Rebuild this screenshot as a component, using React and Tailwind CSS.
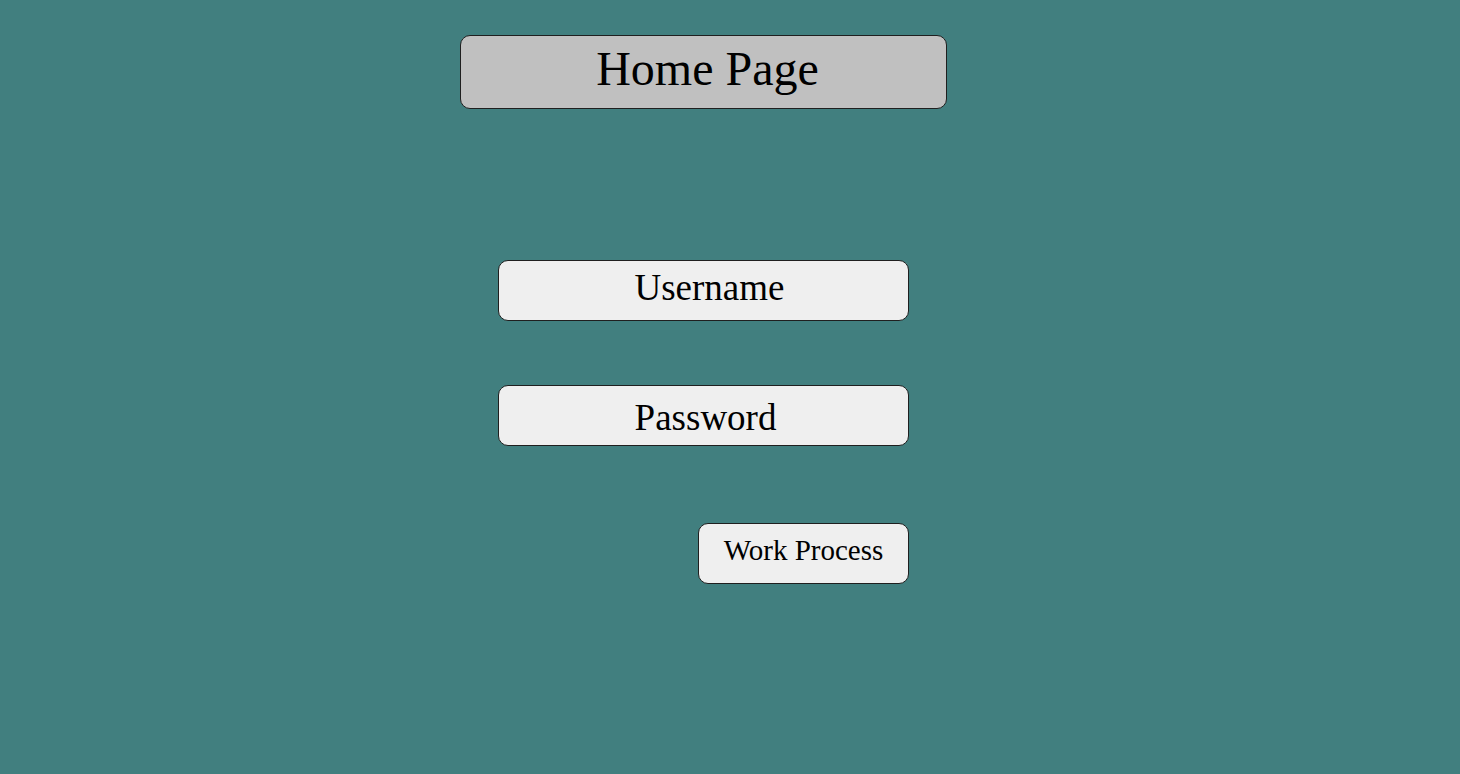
export default function App() {
  return (
    <div className="min-h-screen bg-[#417f7f] pt-[35px] pl-[460px] font-['Liberation_Serif','Times_New_Roman',serif] text-black">
      <div className="w-[487px] h-[74px] pl-2 pb-[6px] flex items-center justify-center rounded-[10px] border border-[#1f1f1f] bg-[#c0c0c0] text-[48px]">
        Home Page
      </div>
      <div className="ml-[38px] mt-[151px] w-[411px] flex flex-col">
        <button className="h-[61px] pl-3 pb-[5px] flex items-center justify-center rounded-[10px] border border-[#1f1f1f] bg-[#efefef] text-[37px]">
          Username
        </button>
        <button className="mt-[64px] h-[61px] pl-1 pt-[4px] flex items-center justify-center rounded-[10px] border border-[#1f1f1f] bg-[#efefef] text-[37px]">
          Password
        </button>
        <button className="mt-[77px] self-end w-[211px] h-[61px] pb-[5px] flex items-center justify-center rounded-[10px] border border-[#1f1f1f] bg-[#efefef] text-[29px]">
          Work Process
        </button>
      </div>
    </div>
  );
}
